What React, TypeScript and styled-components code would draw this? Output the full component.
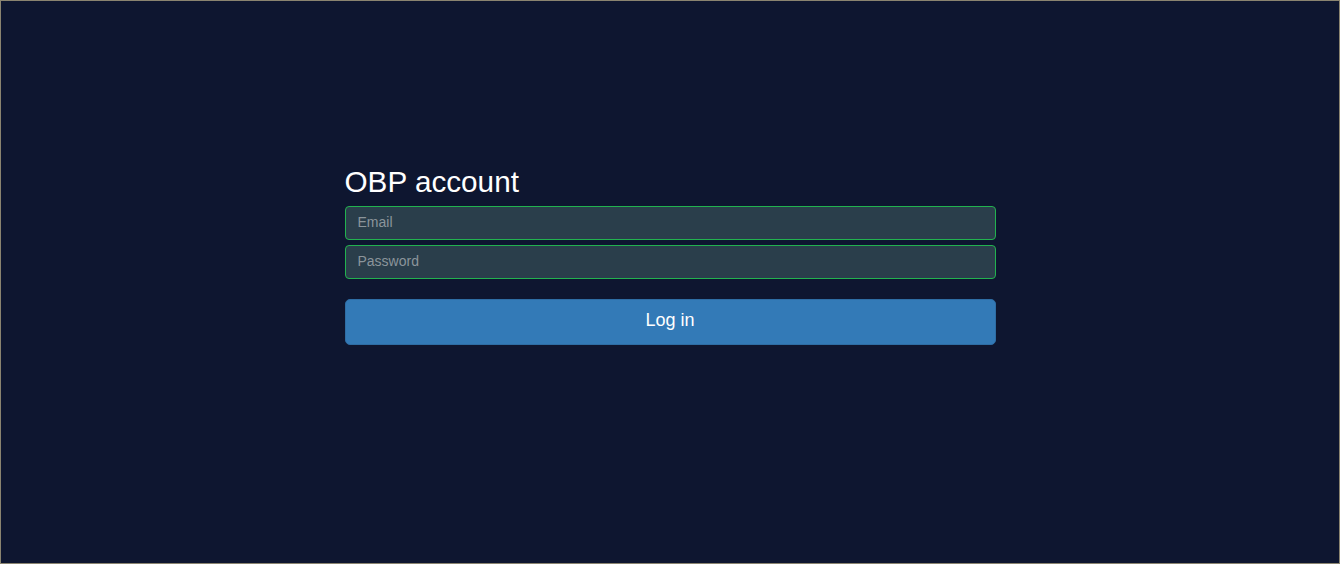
import React from "react";
import styled, { createGlobalStyle } from "styled-components";

const Global = createGlobalStyle`
  html, body { margin: 0; padding: 0; }
  body {
    background: #0e1630;
    font-family: "Liberation Sans", Arial, sans-serif;
  }
  * { box-sizing: border-box; }
`;

const Page = styled.div`
  width: 1340px;
  height: 564px;
  background: #0e1630;
  border: 1px solid #8a8470;
  display: flex;
  justify-content: center;
  padding-top: 163px;
`;

const Form = styled.form`
  width: 651px;
  display: flex;
  flex-direction: column;
`;

const Title = styled.h1`
  margin: 0 0 6px 0;
  font-size: 29.7px;
  font-weight: 400;
  line-height: 36px;
  color: #ffffff;
`;

const Input = styled.input`
  height: 34px;
  width: 100%;
  margin-bottom: 5px;
  padding: 0 12px 2px 12px;
  background: #2a3e4b;
  border: 1px solid #22b24f;
  border-radius: 4px;
  color: #fff;
  font-family: "Liberation Sans", Arial, sans-serif;
  font-size: 14px;
  outline: none;
  &::placeholder { color: #8b959b; }
`;

const Button = styled.button`
  margin-top: 15px;
  height: 46px;
  width: 100%;
  padding: 0 0 3px 0;
  background: #337ab7;
  border: 1px solid #2e6da4;
  border-radius: 5px;
  color: #fff;
  font-family: "Liberation Sans", Arial, sans-serif;
  font-size: 18px;
  cursor: pointer;
`;

export default function App() {
  return (
    <>
      <Global />
      <Page>
        <Form onSubmit={(e) => e.preventDefault()}>
          <Title>OBP account</Title>
          <Input type="email" placeholder="Email" />
          <Input type="password" placeholder="Password" />
          <Button type="submit">Log in</Button>
        </Form>
      </Page>
    </>
  );
}
